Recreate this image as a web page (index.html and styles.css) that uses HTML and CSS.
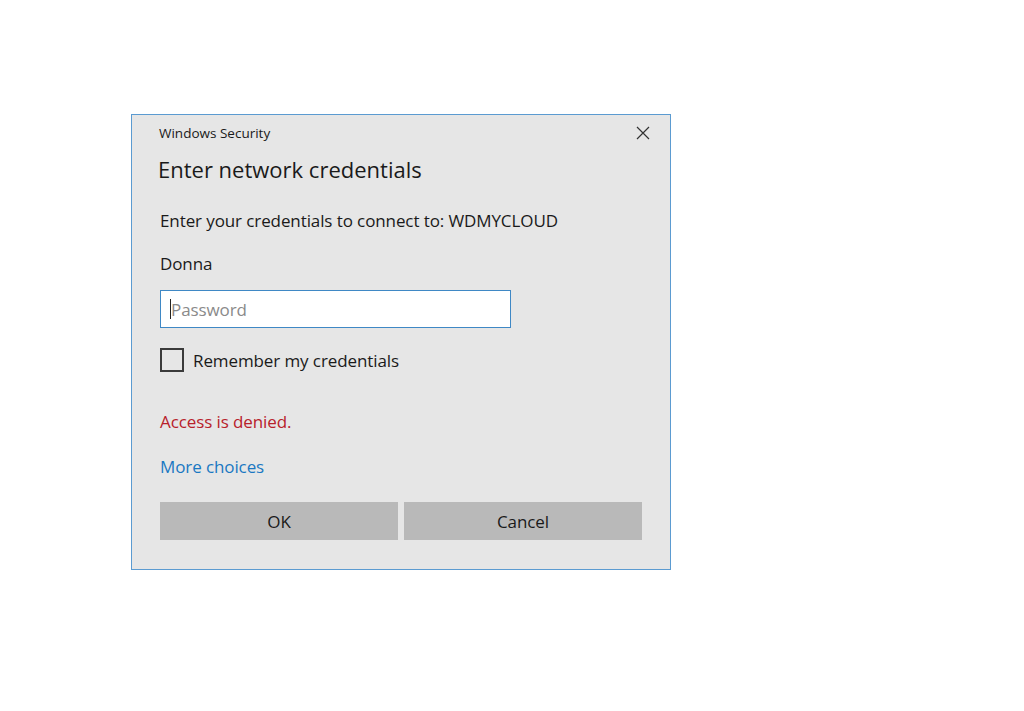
FILE: index.html
```html
<html lang="en">
  <head>
    <meta charset="UTF-8" />
    <meta name="viewport" content="width=device-width, initial-scale=1.0" />
    <title>Windows Security</title>
    <link rel="stylesheet" href="styles.css">
  </head>
  <body>
    <div class="dialog">
      <div class="dialog-head">
        <span class="app-name">Windows Security</span>
        <span class="close-btn">
          <svg width="14" height="14" viewBox="0 0 14 14">
            <path d="M1 1 L13 13 M13 1 L1 13" stroke="#333" stroke-width="1.2" fill="none" />
          </svg>
        </span>
      </div>
      <h1 class="dialog-title">Enter network credentials</h1>
      <p class="prompt">Enter your credentials to connect to: WDMYCLOUD</p>
      <p class="user-name">Donna</p>
      <div class="pass-box">
        <span class="caret"></span>
        <span class="placeholder">Password</span>
      </div>
      <label class="remember">
        <span class="check-box"></span>
        <span>Remember my credentials</span>
      </label>
      <p class="error-msg">Access is denied.</p>
      <a class="more-link">More choices</a>
      <div class="button-row">
        <button class="dlg-btn">OK</button>
        <button class="dlg-btn">Cancel</button>
      </div>
    </div>
  </body>
</html>
```

FILE: styles.css
```css
body {
  margin: 0;
  background: #ffffff;
  font-family: "Open Sans", "Noto Sans", sans-serif;
  color: #1a1a1a;
}

.dialog {
  box-sizing: border-box;
  width: 540px;
  height: 456px;
  margin: 114px 0 0 131px;
  padding: 0 28px 0 28px;
  background: #e6e6e6;
  border: 1px solid #5b9bd1;
}

.dialog-head {
  display: flex;
  justify-content: space-between;
  align-items: center;
  height: 36px;
  margin-left: -1px;
}

.app-name {
  font-size: 13.5px;
}

.close-btn {
  display: flex;
  margin-right: -8px;
}

.dialog-title {
  margin: 3px 0 0 -2px;
  font-size: 22px;
  font-weight: normal;
  line-height: 30px;
}

.prompt,
.user-name {
  margin: 0;
  font-size: 17px;
  line-height: 22px;
  letter-spacing: -0.1px;
}

.prompt {
  margin-top: 26px;
}

.user-name {
  margin-top: 21px;
}

.pass-box {
  box-sizing: border-box;
  display: flex;
  align-items: center;
  width: 351px;
  height: 38px;
  margin-top: 15px;
  padding-left: 9px;
  background: #ffffff;
  border: 1px solid #3f88c5;
}

.caret {
  width: 1px;
  height: 20px;
  background: #222;
}

.placeholder {
  font-size: 17px;
  color: #8a8a8a;
  letter-spacing: -0.1px;
}

.remember {
  display: flex;
  align-items: center;
  gap: 9px;
  margin-top: 20px;
  font-size: 17px;
  letter-spacing: -0.1px;
}

.check-box {
  box-sizing: border-box;
  width: 24px;
  height: 24px;
  border: 2px solid #3a3a3a;
}

.error-msg {
  margin: 39px 0 0 0;
  font-size: 17px;
  line-height: 22px;
  color: #b8212b;
  letter-spacing: -0.1px;
}

.more-link {
  display: block;
  margin-top: 23px;
  font-size: 17px;
  line-height: 22px;
  color: #1a78c2;
  letter-spacing: -0.1px;
}

.button-row {
  display: grid;
  grid-template-columns: 1fr 1fr;
  gap: 6px;
  margin-top: 24px;
  width: 482px;
}

.dlg-btn {
  height: 38px;
  border: none;
  background: #b9b9b9;
  font-family: inherit;
  font-size: 17px;
  color: #1a1a1a;
  letter-spacing: -0.1px;
}
```
